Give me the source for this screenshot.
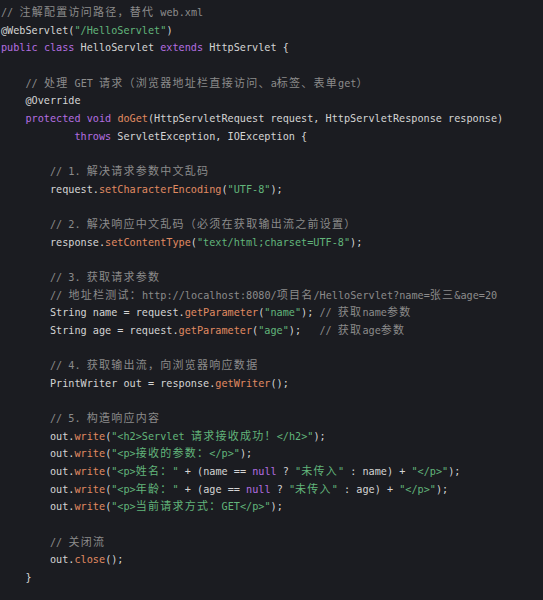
type Kind = 't' | 'c' | 'k' | 'f' | 's'
type Tok = [Kind, string]

const colors: Record<Kind, string> = {
  t: 'text-[#d4d4d4]',
  c: 'text-[#8b8b8b]',
  k: 'text-[#b46ee0]',
  f: 'text-[#e08b62]',
  s: 'text-[#62b57b]',
}

const lines: Tok[][] = [
  [['c', '// 注解配置访问路径，替代 web.xml']],
  [['t', '@WebServlet('], ['s', '"/HelloServlet"'], ['t', ')']],
  [['k', 'public'], ['t', ' '], ['k', 'class'], ['t', ' HelloServlet '], ['k', 'extends'], ['t', ' HttpServlet {']],
  [],
  [['t', '    '], ['c', '// 处理 GET 请求（浏览器地址栏直接访问、a标签、表单get）']],
  [['t', '    @Override']],
  [['t', '    '], ['k', 'protected'], ['t', ' '], ['k', 'void'], ['t', ' '], ['f', 'doGet'], ['t', '(HttpServletRequest request, HttpServletResponse response)']],
  [['t', '            '], ['k', 'throws'], ['t', ' ServletException, IOException {']],
  [],
  [['t', '        '], ['c', '// 1. 解决请求参数中文乱码']],
  [['t', '        request.'], ['f', 'setCharacterEncoding'], ['t', '('], ['s', '"UTF-8"'], ['t', ');']],
  [],
  [['t', '        '], ['c', '// 2. 解决响应中文乱码（必须在获取输出流之前设置）']],
  [['t', '        response.'], ['f', 'setContentType'], ['t', '('], ['s', '"text/html;charset=UTF-8"'], ['t', ');']],
  [],
  [['t', '        '], ['c', '// 3. 获取请求参数']],
  [['t', '        '], ['c', '// 地址栏测试：http://localhost:8080/项目名/HelloServlet?name=张三&age=20']],
  [['t', '        String name = request.'], ['f', 'getParameter'], ['t', '('], ['s', '"name"'], ['t', '); '], ['c', '// 获取name参数']],
  [['t', '        String age = request.'], ['f', 'getParameter'], ['t', '('], ['s', '"age"'], ['t', ');   '], ['c', '// 获取age参数']],
  [],
  [['t', '        '], ['c', '// 4. 获取输出流，向浏览器响应数据']],
  [['t', '        PrintWriter out = response.'], ['f', 'getWriter'], ['t', '();']],
  [],
  [['t', '        '], ['c', '// 5. 构造响应内容']],
  [['t', '        out.'], ['f', 'write'], ['t', '('], ['s', '"<h2>Servlet 请求接收成功！</h2>"'], ['t', ');']],
  [['t', '        out.'], ['f', 'write'], ['t', '('], ['s', '"<p>接收的参数：</p>"'], ['t', ');']],
  [['t', '        out.'], ['f', 'write'], ['t', '('], ['s', '"<p>姓名："'], ['t', ' + (name == '], ['k', 'null'], ['t', ' ? '], ['s', '"未传入"'], ['t', ' : name) + '], ['s', '"</p>"'], ['t', ');']],
  [['t', '        out.'], ['f', 'write'], ['t', '('], ['s', '"<p>年龄："'], ['t', ' + (age == '], ['k', 'null'], ['t', ' ? '], ['s', '"未传入"'], ['t', ' : age) + '], ['s', '"</p>"'], ['t', ');']],
  [['t', '        out.'], ['f', 'write'], ['t', '('], ['s', '"<p>当前请求方式：GET</p>"'], ['t', ');']],
  [],
  [['t', '        '], ['c', '// 关闭流']],
  [['t', '        out.'], ['f', 'close'], ['t', '();']],
  [['t', '    }']],
]

// CJK glyphs take two monospace cells in the screenshot
function renderText(text: string) {
  return text.split(/([\u3000-\u9fff\uff00-\uffef]+)/).map((part, i) =>
    /[\u3000-\u9fff\uff00-\uffef]/.test(part) ? (
      <span key={i} className="text-[11px] tracking-[1.26px]">
        {part}
      </span>
    ) : (
      part
    )
  )
}

export default function App() {
  return (
    <div
      className="w-full h-[600px] bg-[#1b1c21] pl-[1px] pt-[4px] overflow-hidden text-[10.18px]"
      style={{ fontFamily: '"DejaVu Sans Mono", "Noto Sans CJK SC", monospace' }}
    >
      {lines.map((line, i) => (
        <div key={i} className="h-[17.66px] leading-[17.66px] whitespace-pre">
          {line.map(([kind, text], j) => (
            <span key={j} className={colors[kind]}>
              {renderText(text)}
            </span>
          ))}
        </div>
      ))}
    </div>
  )
}
